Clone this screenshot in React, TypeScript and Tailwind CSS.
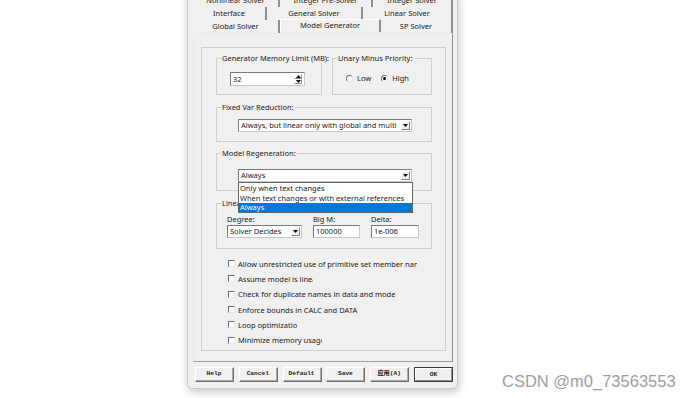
import React from "react";

const UI = "font-['Noto_Sans','Liberation_Sans',sans-serif]";

function Tri() {
  return (
    <svg width="5" height="3" viewBox="0 0 5 3" className="block">
      <path d="M0 0h5L2.5 3z" fill="#000" />
    </svg>
  );
}

function TriUp() {
  return (
    <svg width="5" height="3" viewBox="0 0 5 3" className="block">
      <path d="M0 3h5L2.5 0z" fill="#000" />
    </svg>
  );
}

function Combo({ text, w, arrowW }: { text: string; w: string; arrowW?: string }) {
  return (
    <div
      className={`${w} h-[13px] bg-white border border-t-[#7a7a7a] border-l-[#7a7a7a] border-r-[#c8c8c8] border-b-[#c8c8c8] flex items-stretch p-[1px]`}
    >
      <div className="flex-1 pl-[1px] leading-[9px] whitespace-nowrap overflow-hidden flex items-center">{text}</div>
      <div
        className={`${arrowW ?? "w-[9px]"} bg-[#f0f0f0] border border-t-white border-l-white border-r-[#808080] border-b-[#808080] flex items-center justify-center`}
      >
        <Tri />
      </div>
    </div>
  );
}

function Group({ label, className, children }: { label: string; className: string; children?: React.ReactNode }) {
  return (
    <div className={`relative border border-[#cfcfcf] ${className}`}>
      <span className="absolute left-[4px] top-[-6px] bg-[#f0f0f0] px-[1px] leading-[10px] whitespace-nowrap">{label}</span>
      {children}
    </div>
  );
}

function Check({ text, w }: { text: string; w: string }) {
  return (
    <div className={`h-[15.3px] flex items-center ${w} overflow-hidden whitespace-nowrap`}>
      <span className="w-[7px] h-[7px] shrink-0 bg-white border border-t-[#6e6e6e] border-l-[#6e6e6e] border-r-[#e6e6e6] border-b-[#e6e6e6]" />
      <span className="ml-[3px] leading-[10px]">{text}</span>
    </div>
  );
}

function Radio({ on }: { on?: boolean }) {
  return (
    <span className="w-[7px] h-[7px] rounded-full bg-white border border-t-[#6e6e6e] border-l-[#6e6e6e] border-r-[#e0e0e0] border-b-[#e0e0e0] flex items-center justify-center shrink-0">
      {on && <span className="w-[3px] h-[3px] rounded-full bg-black" />}
    </span>
  );
}

function Btn({ label, def }: { label: string; def?: boolean }) {
  return (
    <div
      className={`w-[39px] h-[15px] flex items-center justify-center bg-[#f0f0f0] font-['Liberation_Mono','Noto_Sans_CJK_SC',monospace] text-[6.2px] font-bold text-[#222] border ${
        def
          ? "border-[#3c3c3c]"
          : "border-t-white border-l-white border-r-[#707070] border-b-[#707070]"
      }`}
    >
      <div
        className={`w-full h-full flex items-center justify-center ${
          def ? "border border-t-white border-l-white border-r-[#909090] border-b-[#909090]" : "border-r border-b border-r-[#a8a8a8] border-b-[#a8a8a8]"
        }`}
      >
        {label}
      </div>
    </div>
  );
}

function Tab({ label, w, sel }: { label: string; w: string; sel?: boolean }) {
  return (
    <div
      className={`${w} h-full flex items-center justify-center whitespace-nowrap border-r-2 border-r-[#8f8f8f] ${
        sel ? "border-l border-l-white border-t border-t-white -mt-[1px] pb-[1px]" : ""
      }`}
    >
      {label}
    </div>
  );
}

export default function App() {
  return (
    <div className={`w-[692px] h-[398px] bg-white relative overflow-hidden ${UI} text-[7.5px] text-[#1a1a1a]`}>
      <div className="absolute left-[187px] top-[-7px] w-[271px] bg-[#f0f0f0] border border-[#c9c9c9] rounded-b-[5px] shadow-[1px_3px_8px_rgba(0,0,0,0.22)] flex flex-col pb-[6px]">
        {/* Tabs */}
        <div className="ml-[5px] w-[260px] flex flex-col">
          <div className="h-[13px] flex">
            <Tab label="Nonlinear Solver" w="w-[87px]" />
            <Tab label="Integer Pre-Solver" w="w-[93px]" />
            <Tab label="Integer Solver" w="w-[80px]" />
          </div>
          <div className="h-[13px] flex">
            <Tab label="Interface" w="w-[74px]" />
            <Tab label="General Solver" w="w-[96px]" />
            <Tab label="Linear Solver" w="w-[90px]" />
          </div>
          <div className="h-[13px] flex">
            <Tab label="Global Solver" w="w-[87px]" />
            <Tab label="Model Generator" w="w-[101px]" sel />
            <Tab label="SP Solver" w="w-[72px]" />
          </div>
        </div>

        {/* Panel */}
        <div className="ml-[5px] w-[260px] h-[329px] border border-t-[#e8e8e8] border-l-[#e8e8e8] border-r-[#8f8f8f] border-b-[#a0a0a0] pt-[13px] pl-[7px]">
          <div className="w-[245px] h-[304px] border border-[#cfcfcf] flex flex-col pl-[14px]">
            {/* Row 1 */}
            <div className="mt-[10px] flex gap-[10px]">
              <Group label="Generator Memory Limit (MB):" className="w-[106px] h-[37px] pt-[13px] pl-[13px]">
                <div className="w-[75px] h-[14px] bg-white border border-t-[#7a7a7a] border-l-[#7a7a7a] border-r-[#c8c8c8] border-b-[#c8c8c8] flex p-[1px]">
                  <div className="flex-1 pl-[1px] leading-[10px] flex items-center">32</div>
                  <div className="w-[8px] flex flex-col mr-[1px]">
                    <div className="flex-1 border border-t-white border-l-white border-r-[#909090] border-b-[#909090] flex items-center justify-center">
                      <TriUp />
                    </div>
                    <div className="flex-1 border border-t-white border-l-white border-r-[#909090] border-b-[#909090] flex items-center justify-center">
                      <Tri />
                    </div>
                  </div>
                </div>
              </Group>
              <Group label="Unary Minus Priority:" className="w-[100px] h-[37px] pt-[15px] pl-[13px]">
                <div className="flex items-center h-[8px]">
                  <Radio />
                  <span className="ml-[4px] leading-[10px]">Low</span>
                  <span className="ml-[10px]" />
                  <Radio on />
                  <span className="ml-[4px] leading-[10px]">High</span>
                </div>
              </Group>
            </div>

            {/* Fixed Var */}
            <Group label="Fixed Var Reduction:" className="mt-[12px] w-[216px] h-[35px] pt-[11px] pl-[21px]">
              <Combo text="Always, but linear only with global and multi" w="w-[174px]" />
            </Group>

            {/* Model Regeneration */}
            <Group label="Model Regeneration:" className="mt-[11px] w-[216px] h-[38px] pt-[15px] pl-[21px]">
              <div className="relative w-[174px]">
                <Combo text="Always" w="w-[174px]" />
                <div className="absolute z-10 left-0 top-[13px] w-[175px] h-[31px] bg-white border border-[#646464] flex flex-col">
                  <div className="h-[10px] leading-[10px] pl-[1px] whitespace-nowrap">Only when text changes</div>
                  <div className="h-[10px] leading-[10px] pl-[1px] whitespace-nowrap">When text changes or with external references</div>
                  <div className="h-[9px] leading-[9px] pl-[1px] whitespace-nowrap bg-[#0078d7] text-white">Always</div>
                </div>
              </div>
            </Group>

            {/* Linearization */}
            <Group label="Linearization:" className="mt-[12px] w-[216px] h-[46px] pt-[10px] pl-[10px]">
              <div className="flex gap-[11px]">
                <div className="flex flex-col gap-[1px]">
                  <div className="h-[10px] leading-[10px]">Degree:</div>
                  <Combo text="Solver Decides" w="w-[75px]" />
                </div>
                <div className="flex flex-col gap-[1px]">
                  <div className="h-[10px] leading-[10px]">Big M:</div>
                  <div className="w-[47px] h-[13px] bg-white border border-t-[#7a7a7a] border-l-[#7a7a7a] border-r-[#c8c8c8] border-b-[#c8c8c8] pl-[2px] leading-[11px]">100000</div>
                </div>
                <div className="flex flex-col gap-[1px]">
                  <div className="h-[10px] leading-[10px]">Delta:</div>
                  <div className="w-[48px] h-[13px] bg-white border border-t-[#7a7a7a] border-l-[#7a7a7a] border-r-[#c8c8c8] border-b-[#c8c8c8] pl-[2px] leading-[11px]">1e-006</div>
                </div>
              </div>
            </Group>

            {/* Checkboxes */}
            <div className="mt-[7px] pl-[12px] flex flex-col">
              <Check text="Allow unrestricted use of primitive set member names" w="w-[189px]" />
              <Check text="Assume model is linear" w="w-[85px]" />
              <Check text="Check for duplicate names in data and model" w="w-[167px]" />
              <Check text="Enforce bounds in CALC and DATA" w="w-[189px]" />
              <Check text="Loop optimization" w="w-[69px]" />
              <Check text="Minimize memory usage" w="w-[94px]" />
            </div>
          </div>
        </div>

        {/* Buttons */}
        <div className="ml-[7px] w-[258px] mt-[5px] flex justify-between">
          <Btn label="Help" />
          <Btn label="Cancel" />
          <Btn label="Default" />
          <Btn label="Save" />
          <Btn label="应用(A)" />
          <Btn label="OK" def />
        </div>
      </div>

      <div className="absolute left-[502px] top-[370px] font-['Liberation_Sans',sans-serif] text-[16.5px] leading-[22px] text-[#9e9e9e] whitespace-nowrap">
        CSDN @m0_73563553
      </div>
    </div>
  );
}
